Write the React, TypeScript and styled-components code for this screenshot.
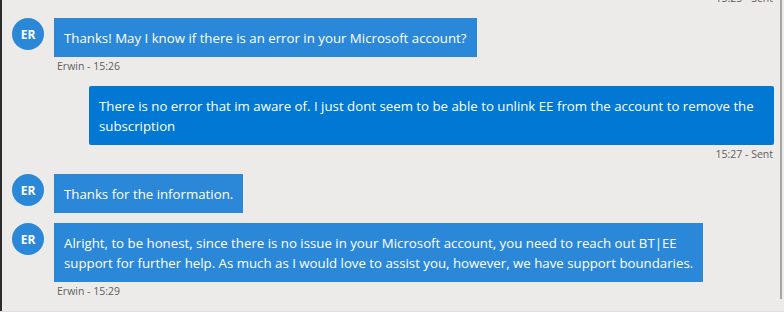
import React from "react";
import styled, { createGlobalStyle } from "styled-components";

const received_blue = "#2B88D8";
const sent_blue = "#0078D4";
const chat_bg = "#EDEBE9";
const meta_grey = "#605E5C";

type Message = {
    id: number;
    mine: boolean;
    lines: string[];
    meta?: string;
    wrap?: boolean;
};

const messages: Message[] = [
    { id: 0, mine: true, lines: [], meta: "15:25 - Sent" },
    {
        id: 1,
        mine: false,
        lines: ["Thanks! May I know if there is an error in your Microsoft account?"],
        meta: "Erwin - 15:26",
    },
    {
        id: 2,
        mine: true,
        wrap: true,
        lines: [
            "There is no error that im aware of. I just dont seem to be able to unlink EE from the account to remove the subscription",
        ],
        meta: "15:27 - Sent",
    },
    { id: 3, mine: false, lines: ["Thanks for the information."] },
    {
        id: 4,
        mine: false,
        lines: [
            "Alright, to be honest, since there is no issue in your Microsoft account, you need to reach out BT|EE",
            "support for further help. As much as I would love to assist you, however, we have support boundaries.",
        ],
        meta: "Erwin - 15:29",
    },
];

const GlobalStyle = createGlobalStyle`
    html, body {
        margin: 0;
        padding: 0;
        background: #ffffff;
    }
    body {
        font-family: "Open Sans", "Noto Sans", "Liberation Sans", sans-serif;
    }
`;

export default function App() {
    return (
        <>
            <GlobalStyle />
            <Window>
                <ChatPanel>
                    <MessageList>
                        {messages.map((m) => (
                            <Row key={m.id} $mine={m.mine}>
                                {!m.mine && m.lines.length > 0 && <Avatar>ER</Avatar>}
                                <Column $mine={m.mine}>
                                    {m.lines.length > 0 && (
                                        <Bubble $mine={m.mine} $wrap={!!m.wrap}>
                                            {m.lines.map((l, i) => (
                                                <React.Fragment key={i}>
                                                    {i > 0 && <br />}
                                                    {l}
                                                </React.Fragment>
                                            ))}
                                        </Bubble>
                                    )}
                                    {m.meta && <Meta $mine={m.mine}>{m.meta}</Meta>}
                                </Column>
                            </Row>
                        ))}
                    </MessageList>
                    <ScrollThumb />
                </ChatPanel>
                <Footer />
            </Window>
        </>
    );
}

const Window = styled.div`
    width: 784px;
    height: 328px;
    display: flex;
    flex-direction: column;
    overflow: hidden;
`;

const ChatPanel = styled.div`
    position: relative;
    height: 311px;
    flex: none;
    background-color: ${chat_bg};
    border-left: 2px solid #2d2d2d;
    overflow: hidden;
`;

const MessageList = styled.div`
    display: flex;
    flex-direction: column;
    gap: 10px;
    margin-top: -11px;
    padding: 0 10px 0 10px;
`;

const Row = styled.div<{ $mine: boolean }>`
    display: flex;
    justify-content: ${(p) => (p.$mine ? "flex-end" : "flex-start")};
    align-items: flex-start;
    gap: 10px;
    padding-left: ${(p) => (p.$mine ? "77px" : "0")};
`;

const Column = styled.div<{ $mine: boolean }>`
    display: flex;
    flex-direction: column;
    align-items: ${(p) => (p.$mine ? "flex-end" : "flex-start")};
    min-width: 0;
    flex: ${(p) => (p.$mine ? "1" : "none")};
`;

const Avatar = styled.div`
    width: 32px;
    height: 32px;
    flex: none;
    border-radius: 50%;
    background-color: ${received_blue};
    color: #ffffff;
    font-size: 12px;
    font-weight: 700;
    display: flex;
    align-items: center;
    justify-content: center;
`;

const Bubble = styled.div<{ $mine: boolean; $wrap: boolean }>`
    background-color: ${(p) => (p.$mine ? sent_blue : received_blue)};
    color: #ffffff;
    font-size: 13.25px;
    line-height: 20px;
    padding: 10px 10px 9px;
    border-radius: ${(p) => (p.$mine ? "2px" : "0")};
    white-space: ${(p) => (p.$wrap ? "normal" : "nowrap")};
    align-self: ${(p) => (p.$wrap ? "stretch" : "auto")};
`;

const Meta = styled.div<{ $mine: boolean }>`
    font-size: 10.5px;
    line-height: 15px;
    padding: 2px ${(p) => (p.$mine ? "1px" : "0")} 2px ${(p) => (p.$mine ? "0" : "3px")};
    color: ${meta_grey};
`;

const ScrollThumb = styled.div`
    position: absolute;
    top: 0;
    right: 2px;
    width: 2px;
    height: 299px;
    background-color: #a6a6a6;
`;

const Footer = styled.div`
    flex: 1;
    background-color: #ffffff;
    border-top: 1px solid #e1dfdd;
`;
